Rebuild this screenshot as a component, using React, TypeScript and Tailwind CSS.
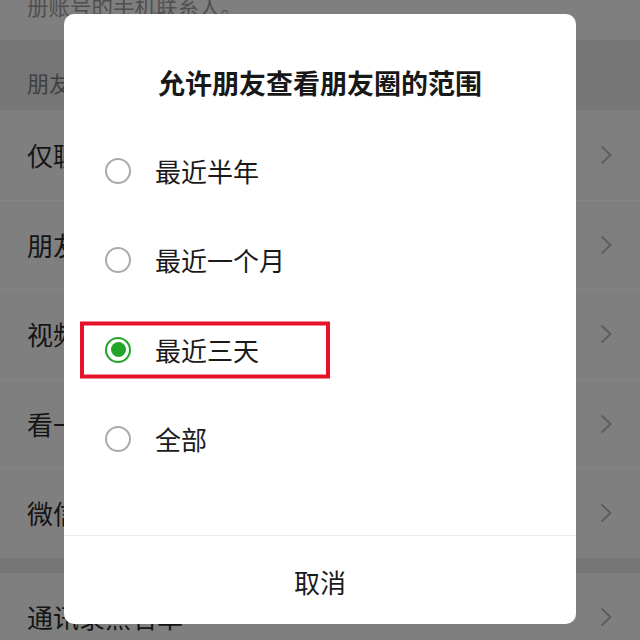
const rows = ["仅聊天", "朋友圈", "视频号", "看一看", "微信运动"];
const options = ["最近半年", "最近一个月", "最近三天", "全部"];
const selected = 2;

const Chevron = () => (
  <svg width="12" height="20" viewBox="0 0 12 20" fill="none" className="text-[#5c5c5c]">
    <polyline points="1.5,1.5 10.5,10 1.5,18.5" stroke="currentColor" strokeWidth="1.8" />
  </svg>
);

const Row = ({ label, first }: { label: string; first?: boolean }) => (
  <div
    className={`flex items-center justify-between h-[89.5px] pl-[27px] pr-[28px] ${
      first ? "" : "border-t border-[#868686]"
    }`}
  >
    <span className="text-[26px] leading-[30px] text-[#141414]">{label}</span>
    <Chevron />
  </div>
);

const App = () => {
  return (
    <div
      className="relative w-[640px] h-[640px] overflow-hidden bg-[#7f7f7f]"
      style={{ fontFamily: '"Noto Sans CJK SC", "Noto Sans", sans-serif' }}
    >
      {/* page behind the dialog */}
      <div className="h-[40px] pl-[27px] flex flex-col">
        <p className="-mt-[7px] text-[21.5px] leading-[26px] text-[#4f4f4f]">
          册账号的手机联系人。
        </p>
      </div>
      <div className="h-[70px] bg-[#767676] pl-[27px] flex items-end pb-[16px]">
        <span className="text-[22px] leading-[24px] text-[#3f3f3f]">朋友权限</span>
      </div>
      {rows.map((r, i) => (
        <Row key={r} label={r} first={i === 0} />
      ))}
      <div className="h-[15px] bg-[#767676]" />
      <Row label="通讯录黑名单" first />

      {/* dialog */}
      <div className="absolute left-[64px] top-[14px] w-[512px] h-[610px] bg-white rounded-[10px] flex flex-col">
        <div className="pt-[51px] pb-[25px] text-center">
          <h2 className="text-[27px] leading-[36px] font-bold text-[#181818]">
            允许朋友查看朋友圈的范围
          </h2>
        </div>
        {options.map((o, i) => (
          <div key={o} className="relative flex items-center h-[89.5px] pl-[41px]">
            {i === selected ? (
              <span className="w-[26px] h-[26px] rounded-full border-[2px] border-[#22a62a] flex items-center justify-center">
                <span className="w-[15px] h-[15px] rounded-full bg-[#22a62a]" />
              </span>
            ) : (
              <span className="w-[26px] h-[26px] rounded-full border-[2px] border-[#ababab]" />
            )}
            <span className="ml-[24px] text-[26px] leading-[30px] text-[#1a1a1a]">{o}</span>
            {i === selected && (
              <div className="absolute left-[16px] top-1/2 -translate-y-1/2 w-[250px] h-[57px] border-[4px] border-[#e5122a]" />
            )}
          </div>
        ))}
        <div className="flex-1" />
        <div className="h-[89px] border-t border-[#ececec] flex items-center justify-center pt-[4px]">
          <span className="text-[26px] leading-[30px] text-[#1a1a1a]">取消</span>
        </div>
      </div>
    </div>
  );
};

export default App;
